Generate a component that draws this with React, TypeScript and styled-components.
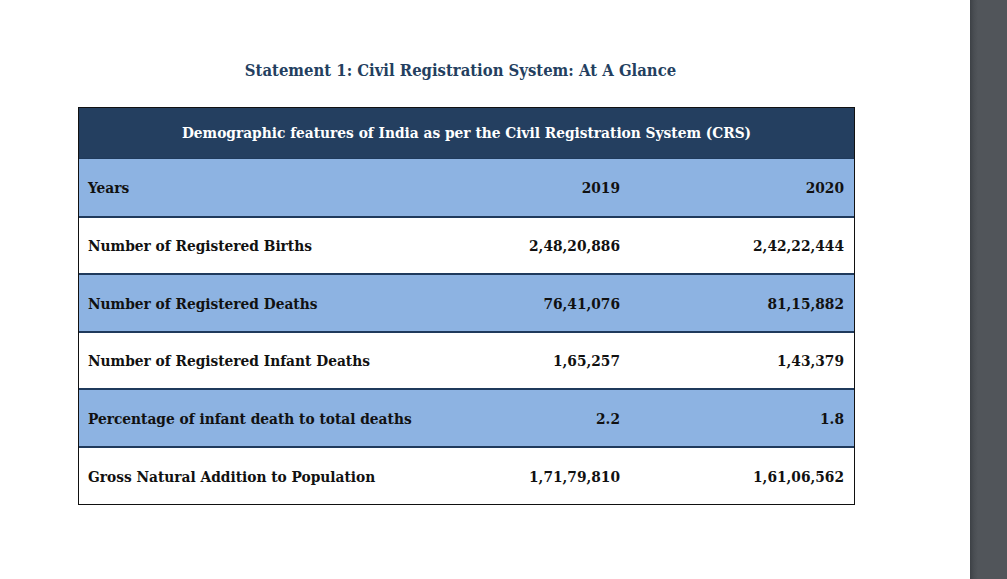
import React from "react";
import styled, { createGlobalStyle } from "styled-components";

const Global = createGlobalStyle`
  html, body { margin: 0; padding: 0; background: #ffffff; }
  body { font-family: "DejaVu Serif Condensed", "DejaVu Serif", "Liberation Serif", serif; font-stretch: condensed; }
  #root { width: 1007px; height: 579px; }
`;

const Frame = styled.div`
  display: flex;
  width: 1007px;
  height: 579px;
  overflow: hidden;
`;

const Page = styled.div`
  flex: 1;
  display: flex;
  flex-direction: column;
  padding: 59px 0 0 78px;
`;

const Title = styled.h1`
  margin: 0 0 24px 0;
  width: 765px;
  text-align: center;
  font-size: 16.5px;
  font-weight: 700;
  color: #243f60;
  line-height: 24px;
`;

const Table = styled.div`
  width: 777px;
  border: 1px solid #111;
  box-sizing: border-box;
  display: flex;
  flex-direction: column;
`;

const Caption = styled.div`
  height: 50px;
  background: #243f60;
  color: #ffffff;
  font-weight: 700;
  font-size: 15.3px;
  display: flex;
  align-items: center;
  justify-content: center;
  border-bottom: 1px solid #1f3a5c;
`;

const Row = styled.div<{ $shade: boolean; $h: number; $last?: boolean }>`
  display: grid;
  grid-template-columns: 326px 225px 224px;
  height: ${(p) => p.$h}px;
  align-items: center;
  background: ${(p) => (p.$shade ? "#8db3e2" : "#ffffff")};
  border-bottom: ${(p) => (p.$last ? "none" : "2px solid #1f3a5c")};
  font-weight: 700;
  font-size: 15.3px;
  color: #111111;
  padding-top: 1px;
  box-sizing: border-box;
`;

const Label = styled.div`
  padding-left: 9px;
  white-space: nowrap;
`;

const Num = styled.div`
  text-align: right;
  padding-right: 10px;
`;

const Scrollbar = styled.div`
  width: 37px;
  height: 100%;
  background: linear-gradient(to right, #3d4146 0px, #4a4e53 4px, #51555a 8px, #51555a 100%);
`;

const rows: [string, string, string, number][] = [
  ["Years", "2019", "2020", 57],
  ["Number of Registered Births", "2,48,20,886", "2,42,22,444", 55],
  ["Number of Registered Deaths", "76,41,076", "81,15,882", 56],
  ["Number of Registered Infant Deaths", "1,65,257", "1,43,379", 55],
  ["Percentage of infant death to total deaths", "2.2", "1.8", 56],
  ["Gross Natural Addition to Population", "1,71,79,810", "1,61,06,562", 56],
];

export default function App() {
  return (
    <>
      <Global />
      <Frame>
        <Page>
          <Title>Statement 1: Civil Registration System: At A Glance</Title>
          <Table>
            <Caption>Demographic features of India as per the Civil Registration System (CRS)</Caption>
            {rows.map((r, i) => (
              <Row
                key={i}
                $shade={i % 2 === 0}
                $h={r[3] + (i === rows.length - 1 ? 0 : 2)}
                $last={i === rows.length - 1}
              >
                <Label>{r[0]}</Label>
                <Num>{r[1]}</Num>
                <Num>{r[2]}</Num>
              </Row>
            ))}
          </Table>
        </Page>
        <Scrollbar />
      </Frame>
    </>
  );
}
